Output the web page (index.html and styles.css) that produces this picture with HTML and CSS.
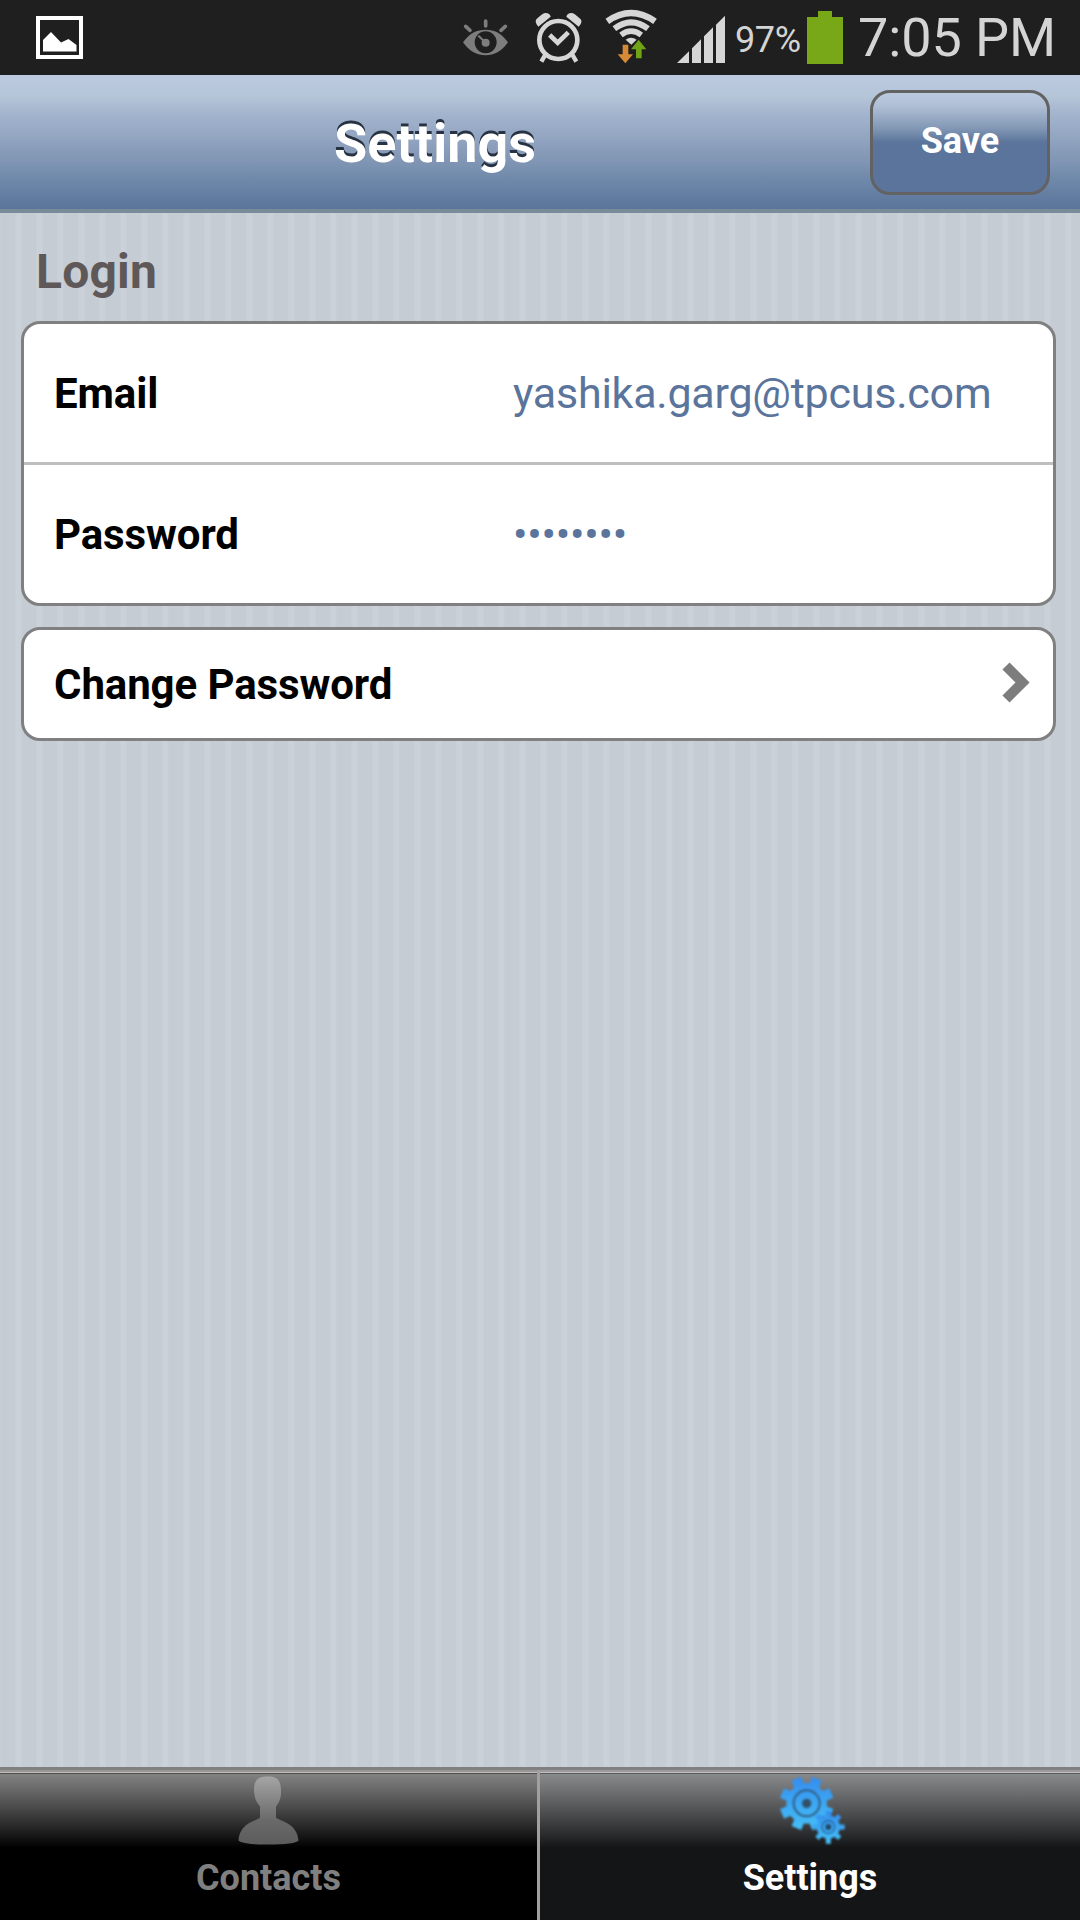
FILE: index.html
```html
<!DOCTYPE html>
<html lang="en">
<head>
<meta charset="utf-8">
<title>Settings</title>
<link rel="stylesheet" href="styles.css">
</head>
<body>
<div class="screen">
  <div class="status">
    <svg class="picture" viewBox="0 0 48 44"><rect x="2" y="2" width="43" height="39" fill="none" stroke="#fff" stroke-width="4"/><path d="M7 24 15 16 25 26.500 32.500 23 40.500 29V35.500H7Z" fill="#fff"/></svg>
    <svg class="eye" viewBox="60 0 150 225"><g fill="none" stroke="#7d7d7d" stroke-linecap="round"><path d="M137 63V78M77 79 90 91M196 79 183 91" stroke-width="11"/></g><path fill="#7d7d7d" fill-rule="evenodd" d="M69 127C89 99 111 89 137 89S184 99 204 127C184 155 163 166 137 166S89 155 69 127ZM104 127A33 33 0 1 0 170 127A33 33 0 1 0 104 127Z"/><circle cx="137" cy="128" r="12" fill="#7d7d7d"/><path d="M115 107 135 126" stroke="#7d7d7d" stroke-width="6"/></svg>
    <svg class="alarm" viewBox="279 0 150 225"><g fill="none" stroke="#d6d6d6"><circle cx="355" cy="120" r="57" stroke-width="14"/><path d="M329 105 353 128 385 97" stroke-width="14"/><path d="M316 164 304 185M397 164 409 185" stroke-width="13"/></g><path fill="#d6d6d6" d="M295 80 332 50Q329 38 315 39Q307 40 289 58Q283 67 295 80ZM416 80 379 50Q382 38 396 39Q404 40 422 58Q429 67 416 80Z"/></svg>
    <svg class="wifi" viewBox="489 0 165 225"><g fill="none" stroke="#d6d6d6"><path d="M502 64Q573 14 645 64" stroke-width="19"/><path d="M523 86Q574 48 624 86" stroke-width="18"/><path d="M543 105Q573 82 604 105" stroke-width="17"/></g><path fill="#d6d6d6" d="M557 119Q573 107 590 119L574 134Z"/><path fill="#d68a35" d="M548 134H565V163H579L556 190 533 163H548Z"/><path fill="#70a315" d="M588 175V148H573L596 119 619 148H605V175Z"/></svg>
    <svg class="signal" viewBox="708 0 150 225"><path fill="#d6d6d6" d="M711 189 747 154V189ZM756 189V145L783 118V189ZM792 189V109L819 82V189ZM828 189V74L855 47V189Z"/></svg>
    <span class="percent">97%</span>
    <svg class="battery" viewBox="0 0 36 53"><path fill="#78a818" d="M11 0H25V6H36V53H0V6H11Z"/></svg>
    <span class="time">7:05 PM</span>
  </div>
  <header class="header">
    <h1 class="title">Settings</h1>
    <button class="save"><span>Save</span></button>
  </header>
  <main class="content">
    <h2 class="section">Login</h2>
    <div class="card">
      <div class="row"><span class="label">Email</span><span class="value">yashika.garg@tpcus.com</span></div>
      <div class="row"><span class="label">Password</span><span class="dots">••••••••</span></div>
    </div>
    <div class="card link">
      <span class="label">Change Password</span>
      <svg class="chevron" viewBox="0 0 28 42"><path d="M4 4 20.500 20.500 4 37" fill="none" stroke="#7d7d7d" stroke-width="10"/></svg>
    </div>
  </main>
  <nav class="tabs">
    <div class="tab">
      <svg class="person" viewBox="237 1774.500 64 76"><defs><linearGradient id="pg" x1="0" y1="0" x2="0" y2="1"><stop offset="0" stop-color="#a5a5a5"/><stop offset=".65" stop-color="#696969"/><stop offset="1" stop-color="#5c5c5c"/></linearGradient></defs><path fill="url(#pg)" d="M267.500 1778C277 1778 280.500 1781 281 1791C281.500 1800 279 1804 276 1808V1819C280 1823 297 1824 298.500 1842Q295 1846 268 1846Q242 1846 238.500 1842C240 1824 256 1823 260 1819V1808C257 1804 254 1800 254 1791C254.500 1781 258 1778 267.500 1778Z"/></svg>
      <span class="tab-name contacts">Contacts</span>
    </div>
    <div class="tab active">
      <svg class="gears" viewBox="3 40 300 228"><defs><linearGradient id="g1" gradientUnits="userSpaceOnUse" x1="0" y1="48" x2="0" y2="215"><stop offset="0" stop-color="#348cee"/><stop offset="1" stop-color="#45c2f8"/></linearGradient><linearGradient id="g2" gradientUnits="userSpaceOnUse" x1="0" y1="155" x2="0" y2="252"><stop offset="0" stop-color="#348cee"/><stop offset="1" stop-color="#45c2f8"/></linearGradient></defs>
        <circle cx="143" cy="131" r="61" fill="url(#g1)"/><path d="M112 57 174 205M174 57 112 205M69 100 217 162M217 100 69 162" stroke="url(#g1)" stroke-width="31"/>
        <circle cx="143" cy="131" r="39" fill="none" stroke="#315d82" stroke-width="6"/><circle cx="143" cy="131" r="14" fill="#315168"/>
        <circle cx="208" cy="202" r="35" fill="url(#g2)"/><path d="M208 154V252M160 202H257M174 168 242 236M242 168 174 236" stroke="url(#g2)" stroke-width="15"/>
        <circle cx="208" cy="202" r="19" fill="none" stroke="#286da4" stroke-width="5"/><circle cx="208" cy="202" r="9" fill="#204563"/></svg>
      <span class="tab-name">Settings</span>
    </div>
  </nav>
</div>
</body>
</html>
```
FILE: styles.css
```css
* { box-sizing: border-box; }
body { margin: 0; font-family: Roboto, "Liberation Sans", sans-serif; }
h1, h2 { margin: 0; }
svg { display: block; flex: none; }
.screen {
  width: 1080px; height: 1920px; display: flex; flex-direction: column; overflow: hidden;
  background: repeating-linear-gradient(90deg, #cad1d9 0, #c5ccd4 1px 14.5px, #cad1d9 16px 21px);
}
.status { height: 75px; background: #1f1f1f; color: #d4d4d4; display: flex; }
.picture { width: 48px; height: 44px; margin: 16px 376px 0 36px; }
.eye, .alarm, .signal { width: 50px; height: 75px; }
.alarm { margin: 0 20px 0 23px; }
.wifi { width: 55px; height: 75px; margin-right: 18px; }
.percent { font-size: 36px; line-height: 80px; width: 79px; padding-left: 9px; letter-spacing: -.4px; white-space: nowrap; }
.battery { width: 36px; height: 53px; margin: 11px 16px 0 2px; }
.time { font-size: 54px; line-height: 75px; margin-left: -1px; letter-spacing: -.1px; white-space: nowrap; }
.header {
  height: 138px; border-bottom: 4px solid #788b99; display: flex; padding: 15px 30px 0 0;
  background: linear-gradient(#bccae0, #b5c5d8 16%, #a4b5ce 28%, #7f94b3 66%, #6f8aaa 77%, #5a749b);
}
.title {
  width: 870px; padding-left: 334px; font-size: 54px; line-height: 108px; color: #fff;
  text-shadow: 0 -3px 0 #273343;
}
.save {
  width: 180px; height: 105px; border: 3px solid #626262; border-radius: 20px; color: #fff; padding: 0 0 3px;
  font: bold 36px Roboto, "Liberation Sans", sans-serif;
  background: linear-gradient(#bccae0, #b1c0d6 12%, #8499b6 35%, #5a749b 50%);
}
.content { flex: 1; padding: 29px 24px 0 21px; }
.section { font-size: 48px; line-height: 60px; padding-left: 15px; margin-bottom: 19px; color: #5f5858; letter-spacing: .2px; }
.card { border: 3px solid #808080; border-radius: 19px; background: #fff; margin-bottom: 21px; }
.row { height: 138px; display: flex; align-items: center; padding-left: 30px; }
.row + .row { height: 141px; border-top: 3px solid #bfbfbf; }
.label { font-size: 42px; font-weight: bold; color: #000; width: 459px; letter-spacing: -.1px; }
.value { font-size: 43px; color: #5a749b; white-space: nowrap; letter-spacing: -.23px; }
.dots { font-size: 43px; color: #5a749b; letter-spacing: -.25px; }
.link { height: 114px; display: flex; align-items: center; justify-content: space-between; padding: 0 23px 0 30px; }
.chevron { width: 28px; height: 42px; margin-top: -3px; filter: blur(.7px); }
.tabs { height: 153px; border-top: 3px solid #808080; display: flex; background: linear-gradient(#9a9696 0 2px, #c0bdbd 2px 3px, #4d4d4d 3px 4px, #828282 4px, #505050 34px, #1c1c1c 63px, #000 78px); }
.tab { width: 540px; padding-top: 3px; border-right: 3px solid #a0a0a0; display: flex; flex-direction: column; align-items: center; }
.tab.active { border: 0; background: rgba(197, 204, 212, .1); }
.person { width: 64px; height: 76px; filter: blur(.7px); }
.gears { width: 100px; height: 76px; filter: blur(.8px); }
.tab-name { font-size: 36px; line-height: 42px; margin-top: 8px; font-weight: bold; color: #fff; }
.contacts { color: #808080; }
```
